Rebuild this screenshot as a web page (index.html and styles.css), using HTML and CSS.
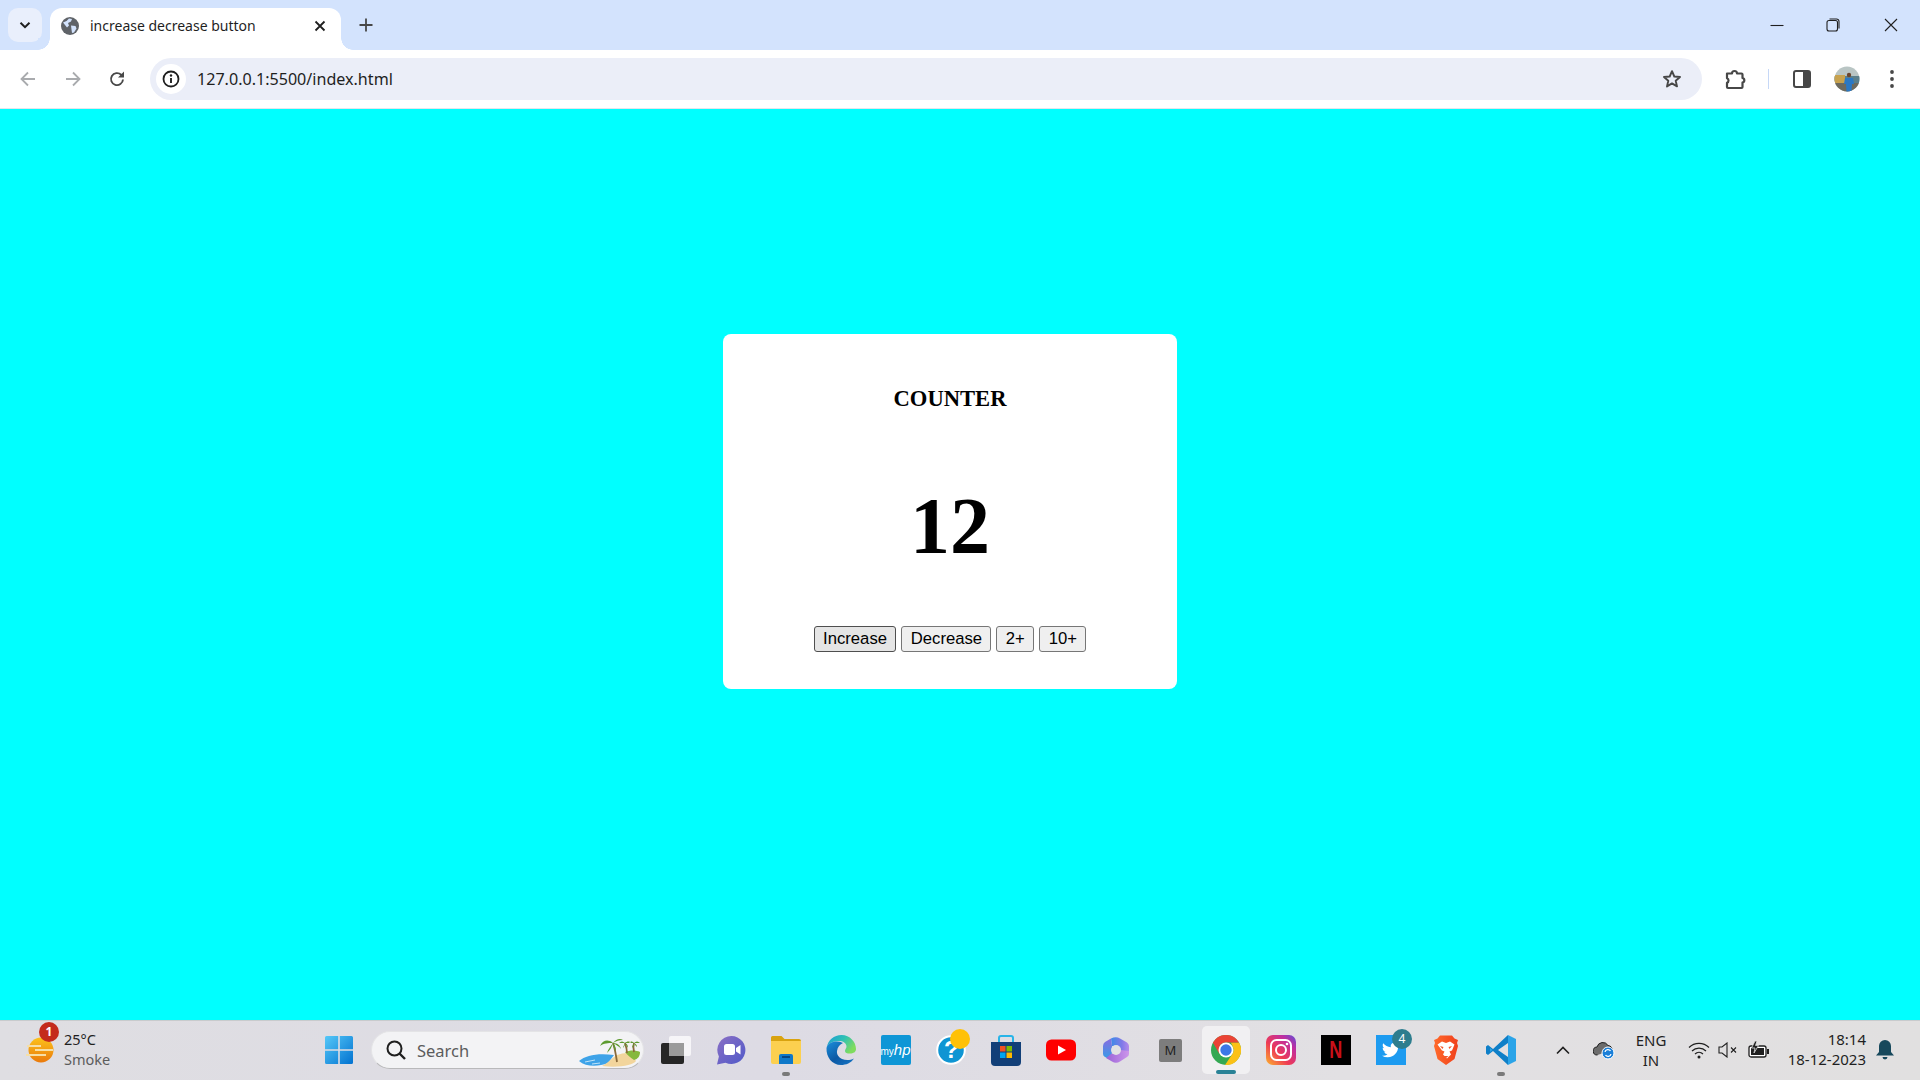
FILE: index.html
```html
<!DOCTYPE html>
<html lang="en">
<head>
  <meta charset="UTF-8">
  <title>increase decrease button</title>
  <link rel="stylesheet" href="styles.css">
</head>
<body>
  <!-- browser tab strip -->
  <div class="tabstrip">
    <div class="tab-search">
      <svg width="14" height="14" viewBox="0 0 14 14"><path d="M2.5 4.8 7 9.2l4.5-4.4" fill="none" stroke="#1f1f1f" stroke-width="2"/></svg>
    </div>
    <div class="tab">
      <svg width="18" height="18" viewBox="0 0 18 18"><circle cx="9" cy="9" r="9" fill="#5f6368"/><path d="M2 5.5 5.5 4 8 1.5l3 .5-1 2.500-3 1.500 1 2.500-2 2L4 8zM10 8.500l4.500.5 1 2.500-2.500 4-2 .5-.5-3.500z" fill="#d3e3fd"/></svg>
      <span class="tab-title">increase decrease button</span>
      <svg class="tab-close" width="12" height="12" viewBox="0 0 12 12"><path d="M1.500 1.500l9 9m0-9-9 9" stroke="#1f1f1f" stroke-width="1.800"/></svg>
    </div>
    <svg class="new-tab" width="14" height="14" viewBox="0 0 14 14"><path d="M7 .5v13M.5 7h13" stroke="#474747" stroke-width="1.800"/></svg>
    <div class="window-btns">
      <svg width="14" height="14" viewBox="0 0 14 14"><path d="M.5 7.500h13" stroke="#1f1f1f" stroke-width="1.100"/></svg>
      <svg width="14" height="14" viewBox="0 0 14 14"><rect x="1" y="2.500" width="10.500" height="10.500" rx="2" fill="none" stroke="#1f1f1f" stroke-width="1.100"/><path d="M3.500 1h7a2.500 2.500 0 0 1 2.500 2.500v7" fill="none" stroke="#1f1f1f" stroke-width="1.100"/></svg>
      <svg width="14" height="14" viewBox="0 0 14 14"><path d="M1 1l12 12m0-12L1 13" stroke="#1f1f1f" stroke-width="1.100"/></svg>
    </div>
  </div>

  <!-- address bar -->
  <div class="toolbar">
    <div class="nav-btns">
      <svg width="18" height="18" viewBox="0 0 18 18"><path d="M16 9H3M9 2.500 2.500 9 9 15.500" fill="none" stroke="#a9abae" stroke-width="1.800"/></svg>
      <svg width="18" height="18" viewBox="0 0 18 18"><path d="M2 9h13M9 2.500 15.500 9 9 15.500" fill="none" stroke="#a9abae" stroke-width="1.800"/></svg>
      <svg width="18" height="18" viewBox="0 0 18 18"><path d="M15 9.500a6 6 0 1 1-1.800-4.700L15 6.500" fill="none" stroke="#474747" stroke-width="1.900"/><path d="M16 1.500v6h-6z" fill="#474747"/></svg>
    </div>
    <div class="omnibox">
      <div class="site-info">
        <svg width="18" height="18" viewBox="0 0 18 18"><circle cx="9" cy="9" r="7.500" fill="none" stroke="#1f1f1f" stroke-width="1.800"/><path d="M9 8v5" stroke="#1f1f1f" stroke-width="1.900"/><circle cx="9" cy="5.500" r="1.200" fill="#1f1f1f"/></svg>
      </div>
      <span class="url">127.0.0.1:5500/index.html</span>
      <svg class="star" width="20" height="20" viewBox="0 0 20 20"><path d="M10 2.200l2.300 5.300 5.700.5-4.300 3.800 1.300 5.600-5-3-5 3 1.300-5.600L2 8l5.700-.5z" fill="none" stroke="#474747" stroke-width="1.900" stroke-linejoin="round"/></svg>
    </div>
    <div class="toolbar-icons">
      <svg class="ext" width="22" height="22" viewBox="0 0 22 22"><path d="M2 5.500h5a2.500 2.500 0 0 1 5 0h4.500a1 1 0 0 1 1 1V10a2.300 2.300 0 0 1 0 4.500v4.500a1 1 0 0 1-1 1H3a1 1 0 0 1-1-1v-4.200a2.500 2.500 0 0 0 0-4.600z" fill="none" stroke="#474747" stroke-width="2.200" stroke-linejoin="round"/></svg>
      <span class="tool-sep"></span>
      <svg class="side" width="18" height="18" viewBox="0 0 18 18"><rect x="1" y="1" width="16" height="16" rx="2" fill="none" stroke="#474747" stroke-width="2"/><rect x="10" y="1" width="7" height="16" fill="#474747"/></svg>
      <svg class="avatar" width="26" height="26" viewBox="0 0 26 26"><defs><clipPath id="av"><circle cx="13" cy="13" r="12.500"/></clipPath></defs><g clip-path="url(#av)"><rect width="26" height="26" fill="#b9c5c4"/><rect y="10" width="26" height="7" fill="#5a7f8c"/><rect y="9" width="11" height="8" fill="#c7a24f"/><rect y="17" width="26" height="9" fill="#6d6a5e"/><circle cx="15" cy="9" r="2.200" fill="#6b4630"/><path d="M11 12h8l1 6h-2l-.5 8h-5l-.5-8h-2z" fill="#2a78c4"/></g></svg>
      <svg class="dots" width="6" height="20" viewBox="0 0 6 20"><circle cx="3" cy="3" r="1.900" fill="#474747"/><circle cx="3" cy="10" r="1.900" fill="#474747"/><circle cx="3" cy="17" r="1.900" fill="#474747"/></svg>
    </div>
  </div>

  <!-- the page itself -->
  <main class="page">
    <div class="card">
      <h3 class="card-title">COUNTER</h3>
      <h1 class="count">12</h1>
      <div class="buttons">
        <button class="btn btn-hover">Increase</button>
        <button class="btn">Decrease</button>
        <button class="btn">2+</button>
        <button class="btn">10+</button>
      </div>
    </div>
  </main>

  <!-- windows taskbar -->
  <footer class="taskbar">
    <div class="weather">
      <div class="weather-icon">
        <svg width="30" height="30" viewBox="0 0 30 30"><defs><linearGradient id="sun" x1="0" y1="0" x2="0" y2="1"><stop offset="0" stop-color="#fcc21b"/><stop offset="1" stop-color="#ea7a0c"/></linearGradient></defs><circle cx="16" cy="15" r="12.500" fill="url(#sun)"/><path d="M2 11h14M10 15h18M1 20h20" stroke="#f6dfa6" stroke-width="2"/></svg>
        <span class="weather-badge">1</span>
      </div>
      <div class="weather-text">
        <span class="temp">25°C</span>
        <span class="cond">Smoke</span>
      </div>
    </div>

    <div class="start">
      <svg width="30" height="30" viewBox="0 0 30 30"><defs><linearGradient id="win" x1="0" y1="0" x2="1" y2="1"><stop offset="0" stop-color="#55c8f8"/><stop offset="1" stop-color="#0272d0"/></linearGradient></defs><path d="M1 2.500A1.500 1.500 0 0 1 2.500 1h11.700v13.200H1zM15.800 1h11.700A1.500 1.500 0 0 1 29 2.500v11.700H15.800zM1 15.800h13.200V29H2.500A1.500 1.500 0 0 1 1 27.500zM15.800 15.800H29v11.700a1.500 1.500 0 0 1-1.500 1.500H15.800z" fill="url(#win)"/></svg>
    </div>

    <div class="search">
      <svg width="22" height="22" viewBox="0 0 22 22"><circle cx="9.500" cy="9.500" r="7" fill="none" stroke="#1f1f1f" stroke-width="2"/><path d="M14.500 14.500 20 20" stroke="#1f1f1f" stroke-width="2.400"/></svg>
      <span class="search-text">Search</span>
      <svg class="search-art" width="65" height="30" viewBox="0 0 65 30"><path d="M1 23C8 17 20 15 36 17L30 25C20 29 8 29 1 23z" fill="#3ea3e8"/><path d="M7 24l10-2M14 26l8-1" stroke="#bfe3f8" stroke-width="1"/><path d="M24 28c6-3 10-8 15-11 6-2 11-3 14-1l5 7c-3 4-16 7-34 5z" fill="#f2d59c"/><path d="M47 14c5-2 11-2 15 0 0 4-2 7-6 8-4-3-7-5-9-8z" fill="#85b83c"/><path d="M39 24C38 17 37 11 35 5M49 15c0-4-1-7-2-10M56 14c-1-4-1-6 0-9" stroke="#8a6a3a" stroke-width="1.800" fill="none"/><path d="M35 5C30 1 25 2 22 8c4-3 8-3 13-3zM35 5c-2 3-5 6-6 10 3-3 5-6 6-10zM35 5c3-4 7-5 10-3-4 0-7 1-10 3zM35 5c4 0 7 2 8 6-2-3-5-4-8-6zM35 5c0 3 1 6 3 8 0-3-1-6-3-8z" fill="#5c9a2e"/><path d="M47 5c-2-2-4-2-6 0 2 0 4 0 6 0zM47 5c2-2 5-2 6 0-2 0-4 0-6 0zM47 5c-1 2-2 4-2 5 1-1 2-3 2-5zM47 5c2 1 3 2 3 5-1-2-2-3-3-5zM56 5c-2-2-3-2-5 0 2 0 3 0 5 0zM56 5c2-2 4-2 6 0-2 0-4 0-6 0zM56 5c-1 2-2 3-2 5 1-1 2-3 2-5zM56 5c2 1 3 2 3 4-1-1-2-2-3-4z" fill="#5c9a2e"/></svg>
    </div>

    <div class="apps">
      <div class="app">
        <svg width="30" height="30" viewBox="0 0 30 30"><rect x="0" y="8" width="23" height="21" rx="2" fill="#262626"/><rect x="8" y="1" width="22" height="20" rx="2" fill="#fff" fill-opacity=".72"/><rect x="8" y="8" width="15" height="13" fill="#9b9b9b"/></svg>
      </div>
      <div class="app">
        <svg width="30" height="30" viewBox="0 0 30 30"><defs><linearGradient id="meet" x1="0" y1="0" x2="1" y2="1"><stop offset="0" stop-color="#8a6fc4"/><stop offset="1" stop-color="#5059c9"/></linearGradient></defs><path d="M15.500 1a14 14 0 1 1-6 26.700L1 29.500l1.900-8A14 14 0 0 1 15.500 1z" fill="url(#meet)"/><rect x="8" y="9" width="11" height="11" rx="2.500" fill="#fff"/><path d="M20 13l4.500-3v9.500L20 16.500z" fill="#fff"/></svg>
      </div>
      <div class="app">
        <svg width="30" height="30" viewBox="0 0 30 30"><path d="M0 2.500A1.500 1.500 0 0 1 1.500 1h9l3 3H28a2 2 0 0 1 2 2v6H0z" fill="#d9a30f"/><path d="M0 6h30v21a2 2 0 0 1-2 2H2a2 2 0 0 1-2-2z" fill="#fcd04f"/><path d="M8 21a2 2 0 0 1 2-2h10a2 2 0 0 1 2 2v8H8z" fill="#0f78c9"/><path d="M11 22h8" stroke="#063b74" stroke-width="1.600"/></svg>
        <span class="run-dot"></span>
      </div>
      <div class="app">
        <svg width="30" height="30" viewBox="0 0 30 30"><defs><linearGradient id="edgeA" x1="0" y1="0" x2="1" y2=".5"><stop offset="0" stop-color="#1a9ad8"/><stop offset=".55" stop-color="#2fc1b4"/><stop offset="1" stop-color="#7fdc5e"/></linearGradient><linearGradient id="edgeB" x1="0" y1="0" x2=".8" y2="1"><stop offset="0" stop-color="#1a8fdc"/><stop offset=".6" stop-color="#0c59a4"/><stop offset="1" stop-color="#1470c0"/></linearGradient></defs><path d="M.5 13C2 5 8 0 15.500 0 24 0 30 7 30 14c0 3-2.500 4.500-6 4.500-3 0-5-.5-5-2.500 0-2 1.500-2.500 1.500-4.500C20.500 8 17 6 13 6 6 6 1.500 9 .5 13z" fill="url(#edgeA)"/><path d="M.5 13C0 22 6 30 15 30c5 0 10-2 13-6.500-4 2-8.500 2-12 .5-3.500-1.500-5.500-5-5-8 .5-4 3-6.500 6-8C10 5 2 7 .5 13z" fill="url(#edgeB)"/></svg>
      </div>
      <div class="app">
        <div class="myhp">my<i>hp</i></div>
      </div>
      <div class="app">
        <svg width="30" height="30" viewBox="0 0 30 30"><circle cx="15" cy="15" r="13.800" fill="#0f95d3" stroke="#fff" stroke-width="2"/></svg>
        <span class="help-mark">?</span>
        <span class="help-badge"></span>
      </div>
      <div class="app">
        <svg width="30" height="32" viewBox="0 0 30 32"><path d="M8 8V4a2 2 0 0 1 2-2h10a2 2 0 0 1 2 2v4" fill="none" stroke="#29b4e8" stroke-width="2"/><path d="M0 8h30v20a4 4 0 0 1-4 4H4a4 4 0 0 1-4-4z" fill="#123f78"/><rect x="9" y="12" width="5.500" height="5.500" fill="#f25022"/><rect x="15.500" y="12" width="5.500" height="5.500" fill="#7fba00"/><rect x="9" y="18.500" width="5.500" height="5.500" fill="#00a4ef"/><rect x="15.500" y="18.500" width="5.500" height="5.500" fill="#ffb900"/></svg>
      </div>
      <div class="app">
        <svg width="30" height="22" viewBox="0 0 30 22"><rect width="30" height="21" y=".5" rx="5.500" fill="#f00"/><path d="M12 6.500v9l8-4.500z" fill="#fff"/></svg>
      </div>
      <div class="app">
        <svg width="28" height="28" viewBox="0 0 28 28"><defs><linearGradient id="copL" x1="0" y1="0" x2="0" y2="1"><stop offset="0" stop-color="#8a6be0"/><stop offset="1" stop-color="#2f9fe8"/></linearGradient><linearGradient id="copT" x1="0" y1="0" x2="1" y2="0"><stop offset="0" stop-color="#3d8ae8"/><stop offset=".6" stop-color="#7f7ae8"/><stop offset="1" stop-color="#b48bea"/></linearGradient><linearGradient id="copB" x1="0" y1="0" x2="1" y2="0"><stop offset="0" stop-color="#9a62d8"/><stop offset="1" stop-color="#cc96ea"/></linearGradient></defs><path d="M9 2.500Q14 0 18 2.500L25 6.500Q27 8 27 10v5L19 19 18 11 10 10z" fill="url(#copT)"/><path d="M9 2.500 3 6Q1 7.500 1 10v8q0 2 2 3l6 3 1-8V10z" fill="url(#copL)"/><path d="M9 18 19 14 27 15v3q0 2-2 3l-7 4.500Q14 28 10 25.500L4 22z" fill="url(#copB)"/><circle cx="14" cy="14" r="5" fill="#e2e1e3"/></svg>
      </div>
      <div class="app">
        <div class="m-icon">M</div>
      </div>
      <div class="app app-active">
        <svg width="30" height="30" viewBox="0 0 30 30"><circle cx="15" cy="15" r="15" fill="#34a853"/><path d="M28 7.500A15 15 0 0 1 14 30l7.500-11.250a7.500 7.500 0 0 0 0-7.500 7 7 0 0 0-2-3.750z" fill="#fbc116"/><path d="M2 7.500a15 15 0 0 1 26 0H15a7.500 7.500 0 0 0-6.500 3.750L9 19z" fill="#ea4335"/><path d="M2 7.500 8.500 19l.5-7.750z" fill="#ea4335"/><circle cx="15" cy="15" r="7.500" fill="#fff"/><circle cx="15" cy="15" r="5.700" fill="#3b78e7"/></svg>
        <span class="run-bar"></span>
      </div>
      <div class="app">
        <svg width="30" height="30" viewBox="0 0 30 30"><defs><linearGradient id="ig" x1="0" y1="1" x2="1" y2="0"><stop offset="0" stop-color="#fdb42b"/><stop offset=".4" stop-color="#ee3a55"/><stop offset=".75" stop-color="#c02ea0"/><stop offset="1" stop-color="#5b51d8"/></linearGradient></defs><rect width="30" height="30" rx="7" fill="url(#ig)"/><rect x="5" y="5" width="20" height="20" rx="5.500" fill="none" stroke="#fff" stroke-width="2"/><circle cx="15" cy="15" r="5" fill="none" stroke="#fff" stroke-width="2"/><circle cx="21" cy="9" r="1.300" fill="#fff"/></svg>
      </div>
      <div class="app">
        <div class="netflix"><span>N</span></div>
      </div>
      <div class="app">
        <div class="twitter">
          <svg width="18" height="18" viewBox="0 0 24 24"><path fill="#fff" d="M23.953 4.570a10 10 0 0 1-2.825.775 4.958 4.958 0 0 0 2.163-2.723c-.951.555-2.005.959-3.127 1.184a4.920 4.920 0 0 0-8.384 4.482C7.690 8.095 4.067 6.130 1.640 3.162a4.822 4.822 0 0 0-.666 2.475c0 1.710.870 3.213 2.188 4.096a4.904 4.904 0 0 1-2.228-.616v.060a4.923 4.923 0 0 0 3.946 4.827 4.996 4.996 0 0 1-2.212.085 4.936 4.936 0 0 0 4.604 3.417 9.867 9.867 0 0 1-6.102 2.105c-.390 0-.779-.023-1.170-.067a13.995 13.995 0 0 0 7.557 2.209c9.053 0 13.998-7.496 13.998-13.985 0-.210 0-.420-.015-.630A9.935 9.935 0 0 0 24 4.590z"/></svg>
        </div>
        <span class="tw-badge">4</span>
      </div>
      <div class="app">
        <svg width="26" height="30" viewBox="0 0 26 30"><defs><linearGradient id="brave" x1="0" y1="0" x2="1" y2="0"><stop offset="0" stop-color="#ff6a2b"/><stop offset="1" stop-color="#f0401c"/></linearGradient></defs><path d="M7 .5h12l2.500 3L25 5l-1 3 1 3-3.500 13L13 30 4.500 24 1 11l1-3-1-3 3.500-1.500z" fill="url(#brave)"/><path d="M4.500 9.500 9 6.500l4 1.500 4-1.500 4.500 3-2.500 6-2.500 1 1.500 3-4 4-4-4 1.500-3-2.500-1z" fill="#fff"/><path d="M7 11l3.500 1-1 2zM19 11l-3.500 1 1 2zM10.500 21h5L13 23z" fill="#f4562a"/></svg>
      </div>
      <div class="app">
        <svg width="30" height="30" viewBox="0 0 30 30"><path d="M22 0 7 14 2 10 0 11.500v7L2 20l5-4 15 14v-8l-10-7 10-7z" fill="#0e7fc8"/><path d="M4 13v4l2.500-2z" fill="#2ba4e8"/><path d="M22 0l8 4v22l-8 4z" fill="#2ba4e8"/></svg>
        <span class="run-dot"></span>
      </div>
    </div>

    <div class="tray">
      <svg class="tray-chevron" width="14" height="10" viewBox="0 0 14 10"><path d="M1 8.500l6-6 6 6" fill="none" stroke="#1f1f1f" stroke-width="1.600"/></svg>
      <svg class="tray-cloud" width="22" height="20" viewBox="0 0 22 20"><path d="M4.500 15a4 4 0 0 1-.5-8 6 6 0 0 1 11-1.500 4.500 4.500 0 0 1 4 4.500" fill="#6c6c6c" stroke="#1f1f1f" stroke-width="1"/><circle cx="15" cy="13" r="6" fill="#1a7fd8" stroke="#fff"/><path d="M12 12a3 3 0 0 1 5.500-1M18 14a3 3 0 0 1-5.500 1" fill="none" stroke="#fff" stroke-width="1.300"/></svg>
      <div class="lang"><span>ENG</span><span>IN</span></div>
      <svg class="tray-wifi" width="22" height="18" viewBox="0 0 22 18"><path d="M1 6.500a14 14 0 0 1 20 0M4 10a10 10 0 0 1 14 0M7 13a6 6 0 0 1 8 0" fill="none" stroke="#1f1f1f" stroke-width="1.200"/><circle cx="11" cy="16" r="1.500" fill="#1f1f1f"/></svg>
      <svg class="tray-sound" width="20" height="16" viewBox="0 0 20 16"><path d="M1 5h3l5-4v14l-5-4H1z" fill="none" stroke="#1f1f1f" stroke-width="1.100"/><path d="M13 5.500l5 5m0-5-5 5" stroke="#1f1f1f" stroke-width="1.100"/></svg>
      <svg class="tray-battery" width="22" height="18" viewBox="0 0 22 18"><rect x="1" y="5" width="17" height="11" rx="2" fill="#fff" stroke="#1f1f1f" stroke-width="1.300"/><rect x="3" y="7" width="13" height="7" fill="#1f1f1f"/><rect x="19" y="8" width="2" height="5" fill="#1f1f1f"/><path d="M7 0 3.500 7H7l-1 5 4.500-7.500H7.500L9 0z" fill="#1f1f1f" stroke="#e0dfe0" stroke-width=".8"/></svg>
      <div class="clock"><span>18:14</span><span>18-12-2023</span></div>
      <svg class="tray-bell" width="18" height="22" viewBox="0 0 18 22"><path d="M9 1a6 6 0 0 1 6 6v6l3 3.500H0L3 13V7a6 6 0 0 1 6-6z" fill="#17495c"/><path d="M6.500 18h5a2.500 2.500 0 0 1-5 0z" fill="#17495c"/></svg>
    </div>
  </footer>
</body>
</html>
```

FILE: styles.css
```css
/* Basic layout */
* {
  box-sizing: border-box;
}

body {
  margin: 0;
  height: 1080px;
  overflow: hidden;
  display: flex;
  flex-direction: column;
  font-family: "Noto Sans", "Open Sans", sans-serif;
  color: #1f1f1f;
}

/* Tab strip */
.tabstrip {
  height: 50px;
  background-color: #d3e3fd;
  display: flex;
  align-items: flex-end;
  padding-left: 8px;
}

.tab-search {
  width: 34px;
  height: 34px;
  margin-bottom: 8px;
  border-radius: 10px;
  background-color: #e9effc;
  display: flex;
  align-items: center;
  justify-content: center;
}

.tab {
  position: relative;
  width: 291px;
  height: 42px;
  margin-left: 8px;
  padding: 0 15px 7px 11px;
  background-color: #fff;
  border-radius: 12px 12px 0 0;
  display: flex;
  align-items: center;
}

.tab::before,
.tab::after {
  content: "";
  position: absolute;
  bottom: 0;
  width: 12px;
  height: 12px;
}

.tab::before {
  left: -12px;
  background: radial-gradient(circle at 0 0, #d3e3fd 11.500px, #fff 12px);
}

.tab::after {
  right: -12px;
  background: radial-gradient(circle at 100% 0, #d3e3fd 11.500px, #fff 12px);
}

.tab-title {
  margin-left: 11px;
  font-size: 14px;
  white-space: nowrap;
  flex: 1;
}

.new-tab {
  margin: 0 0 18px 18px;
}

.window-btns {
  margin-left: auto;
  height: 50px;
  display: flex;
  align-items: center;
  padding-bottom: 1px;
}

.window-btns svg {
  margin-right: 42px;
}

.window-btns svg:nth-child(2) {
  margin-right: 44px;
}

.window-btns svg:last-child {
  margin-right: 22px;
}

/* Address bar */
.toolbar {
  height: 59px;
  background-color: #fff;
  border-radius: 10px 10px 0 0;
  border-bottom: 1px solid #e3e6ec;
  display: flex;
  align-items: center;
}

.nav-btns {
  width: 150px;
  padding-left: 19px;
  display: flex;
  gap: 27px;
}

.nav-btns svg:last-child {
  margin-left: -1px;
}

.omnibox {
  width: 1552px;
  height: 42px;
  background-color: #ebeef8;
  border-radius: 21px;
  display: flex;
  align-items: center;
  padding: 0 20px 0 6px;
}

.site-info {
  width: 30px;
  height: 30px;
  border-radius: 50%;
  background-color: #fff;
  display: flex;
  align-items: center;
  justify-content: center;
}

.url {
  margin-left: 11px;
  font-size: 16.100px;
  flex: 1;
}

.toolbar-icons {
  flex: 1;
  display: flex;
  align-items: center;
  padding-left: 23px;
}

.tool-sep {
  width: 1px;
  height: 20px;
  margin: 0 24px 0 21px;
  background-color: #c6d8f7;
}

.avatar {
  margin-left: 23px;
}

.dots {
  margin-left: 29px;
}

/* The page */
.page {
  flex: 1;
  background-color: #0ff;
  padding: 225px 0 0 723px;
}

.card {
  width: 454px;
  height: 355px;
  background-color: #fff;
  border-radius: 8px;
  display: flex;
  flex-direction: column;
  align-items: center;
  padding-top: 52px;
}

.card-title {
  margin: 0;
  font-family: "Liberation Serif", serif;
  font-size: 22.600px;
  font-weight: bold;
  color: #000;
}

.count {
  margin: 69px 0 0;
  font-family: "Liberation Serif", serif;
  font-size: 80px;
  font-weight: bold;
  color: #000;
}

.buttons {
  margin-top: 54px;
  display: flex;
  gap: 5px;
}

.btn {
  height: 26px;
  padding: 0 8.400px;
  font-family: "Liberation Sans", sans-serif;
  font-size: 16.670px;
  color: #000;
  background-color: #efefef;
  border: 1px solid #767676;
  border-radius: 3px;
}

.btn-hover {
  background-color: #e5e5e5;
  border-color: #4f4f4f;
}

/* Taskbar */
.taskbar {
  height: 60px;
  background: linear-gradient(to right, #dfdee2, #dddbe4 40%, #e2e0e3 70%, #e1e0e0);
  border-top: 1px solid #c8cbcd;
  padding-bottom: 1px;
  display: flex;
  align-items: center;
}

.weather {
  width: 311px;
  padding-left: 25px;
  display: flex;
  align-items: center;
}

.weather-icon {
  position: relative;
  width: 30px;
  height: 30px;
}

.weather-badge {
  position: absolute;
  left: 14px;
  top: -13px;
  width: 20px;
  height: 20px;
  border-radius: 50%;
  background-color: #c42b1c;
  color: #fff;
  font-size: 12px;
  font-weight: bold;
  line-height: 20px;
  text-align: center;
}

.weather-text {
  margin-left: 9px;
  padding-bottom: 3px;
  display: flex;
  flex-direction: column;
  font-size: 14.500px;
  line-height: 20px;
}

.cond {
  color: #5c5c5c;
}

.start {
  width: 55px;
  display: flex;
  justify-content: center;
}

.search {
  width: 273px;
  height: 38px;
  margin-left: 5px;
  background-color: #f3f3f5;
  border: 1px solid #e4e4e6;
  border-bottom-color: #b9b9bb;
  border-radius: 19px;
  display: flex;
  align-items: center;
  padding-left: 13px;
}

.search-text {
  margin-left: 10px;
  font-size: 16.500px;
  color: #5c5c5c;
  flex: 1;
}

.search-art {
  margin-top: 6px;
}

.apps {
  margin-left: 4px;
  display: flex;
}

.app {
  position: relative;
  width: 55px;
  height: 48px;
  display: flex;
  align-items: center;
  justify-content: center;
}

.app-active {
  width: 48px;
  margin: 0 3.500px;
  background-color: #f1f0f2;
  border-radius: 5px;
}

.run-dot {
  position: absolute;
  bottom: -2px;
  left: 24px;
  width: 8px;
  height: 4px;
  border-radius: 2px;
  background-color: #7a7a7a;
}

.run-bar {
  position: absolute;
  bottom: 0;
  left: 14px;
  width: 20px;
  height: 4px;
  border-radius: 2px;
  background-color: #2a8296;
}

.myhp {
  width: 30px;
  height: 30px;
  background-color: #0e96d6;
  border-radius: 2px;
  color: #fff;
  font-family: "Liberation Sans", sans-serif;
  font-size: 10px;
  line-height: 30px;
  text-align: center;
}

.myhp i {
  font-size: 15px;
}

.help-mark {
  position: absolute;
  left: 21px;
  top: 8px;
  color: #fff;
  font-family: "Liberation Sans", sans-serif;
  font-size: 24px;
  font-weight: bold;
  line-height: 32px;
}

.help-badge {
  position: absolute;
  left: 27px;
  top: 3px;
  width: 20px;
  height: 20px;
  border-radius: 50%;
  background-color: #ffc107;
}

.m-icon {
  width: 23px;
  height: 23px;
  background-color: #7d7d7d;
  border-radius: 2px;
  color: #1f1f1f;
  font-size: 13px;
  line-height: 23px;
  text-align: center;
}

.netflix {
  width: 30px;
  height: 30px;
  background-color: #000;
  display: flex;
  align-items: center;
  justify-content: center;
  overflow: hidden;
}

.netflix span {
  color: #c8101a;
  font-family: "Liberation Sans", sans-serif;
  font-size: 24px;
  font-weight: bold;
  transform: scaleX(.75);
}

.twitter {
  width: 30px;
  height: 30px;
  background-color: #1d9bf0;
  display: flex;
  align-items: center;
  justify-content: center;
}

.tw-badge {
  position: absolute;
  left: 29px;
  top: 3px;
  width: 20px;
  height: 20px;
  border-radius: 50%;
  background-color: #2d7d8e;
  color: #fff;
  font-size: 12px;
  line-height: 20px;
  text-align: center;
}

/* System tray */
.tray {
  position: relative;
  flex: 1;
  display: flex;
  align-items: center;
  padding-left: 28px;
}

.tray-cloud {
  margin-left: 23px;
}

.lang {
  width: 50px;
  margin-left: 11px;
  padding-bottom: 1px;
  display: flex;
  flex-direction: column;
  align-items: center;
  font-size: 15px;
  line-height: 20px;
}

.tray-wifi {
  margin-left: 12px;
}

.tray-sound {
  margin-left: 8px;
}

.tray-battery {
  margin-left: 10px;
}

.clock {
  margin-left: auto;
  padding-bottom: 3px;
  display: flex;
  flex-direction: column;
  align-items: flex-end;
  font-size: 15px;
  line-height: 20px;
}

.tray-bell {
  margin: 0 26px 0 10px;
}
```
